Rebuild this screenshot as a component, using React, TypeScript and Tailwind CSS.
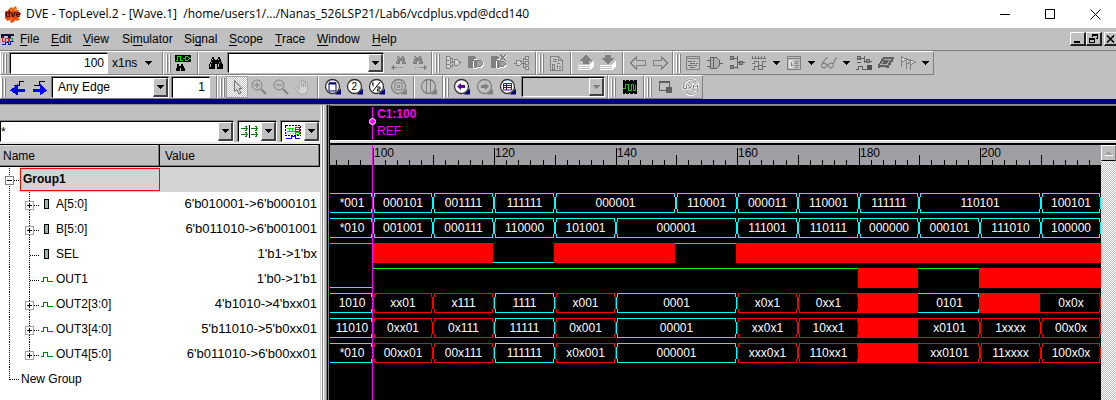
import React from "react";

type Kids = { children?: React.ReactNode };

/* ---------- small building blocks ---------- */

function Grip() {
  return (
    <span className="flex h-[19px] w-1.5 shrink-0 gap-px">
      <span className="w-[2px] border-r border-[#808080] bg-white" />
      <span className="w-[2px] border-r border-[#808080] bg-white" />
    </span>
  );
}

function Group({ children, className = "pl-[2px]" }: Kids & { className?: string }) {
  return (
    <div className={`flex h-6 shrink-0 items-center border-t border-r border-b border-l border-t-white border-r-[#808080] border-b-[#808080] border-l-white ${className}`}>
      {children}
    </div>
  );
}

function Sep() {
  return <span className="mx-[3px] h-full w-[2px] shrink-0 border-r border-l border-r-white border-l-[#808080]" />;
}

function Tool({ label, children, className = "w-[22px]" }: Kids & { label: string; className?: string }) {
  return (
    <button type="button" aria-label={label} className={`flex h-[22px] shrink-0 items-center justify-center ${className}`}>
      <svg width="18" height="18" viewBox="0 0 18 18" fill="none" shapeRendering="crispEdges">
        {children}
      </svg>
    </button>
  );
}

function Down({ color = "#000" }: { color?: string }) {
  return (
    <svg width="7" height="4" viewBox="0 0 7 4" shapeRendering="crispEdges">
      <path d="M0 0h7v1h-1v1h-1v1h-1v1h-1v-1h-1v-1h-1v-1h-1z" fill={color} />
    </svg>
  );
}

function MenuArrow({ label }: { label: string }) {
  return (
    <button type="button" aria-label={label} className="flex h-[22px] w-[13px] shrink-0 items-center justify-center">
      <Down />
    </button>
  );
}

const dropFace =
  "flex h-full w-[15px] shrink-0 items-center justify-center border-t border-l border-r-2 border-b-2 border-t-white border-l-white border-r-[#404040] border-b-[#404040] bg-[#c0c0c0]";

function DropButton({ label }: { label: string }) {
  return (
    <button type="button" aria-label={label} className={dropFace}>
      <Down />
    </button>
  );
}

const sunken =
  "border border-t-black border-l-black border-b-white border-r-white shadow-[-1px_-1px_0_#808080]";

/* ---------- drawings for the tool buttons ---------- */

const Binoculars = ({ color = "#000" }: { color?: string }) => (
  <path
    fill={color}
    fillRule="evenodd"
    d="M5 3h2v2h1v1h2v-1h1v-2h2v2h1v3h1v2h1v5h-6v-5h-2v5h-6v-5h1v-2h1v-3h1zM5 6h1v-1h-1zM11 6h1v-1h-1zM4 9h1v-1h-1zM12 9h1v-1h-1zM3 13h1v-3h-1zM11 13h1v-3h-1z"
  />
);

function FindArrow({ left = false }: { left?: boolean }) {
  return (
    <>
      <path fill="#808080" d={left ? "M8 2h2v1h1v1h1v-1h1v-1h2v2h1v4h1v2h-4v-3h-2v3h-4v-3h1v-3h1z" : "M3 2h2v1h1v1h1v-1h1v-1h2v2h1v3h1v3h-4v-3h-2v3h-4v-3h1v-3h1z"} />
      <path fill="#c0c0c0" d={left ? "M9 4h1v1h-1zM13 4h1v1h-1zM8 7h1v1h-1zM14 7h1v1h-1z" : "M4 4h1v1h-1zM8 4h1v1h-1zM3 7h1v1h-1zM9 7h1v1h-1z"} />
      {left ? (
        <path stroke="#808080" d="M2 13.5h6M9 13.5h1M11 13.5h1M13 13.5h1M4.5 11v5M3.5 12v3" />
      ) : (
        <path stroke="#808080" d="M16 13.5h-6M9 13.5h-1M7 13.5h-1M5 13.5h-1M13.5 11v5M14.5 12v3" />
      )}
    </>
  );
}

function Lens({ off = false, children }: Kids & { off?: boolean }) {
  const ink = off ? "#808080" : "#303030";
  return (
    <g shapeRendering="auto">
      <path d="M11 16.5h6v-6z" fill={off ? "#808080" : "#000080"} />
      <circle cx="8.5" cy="8.5" r="7" fill={off ? "#c0c0c0" : "#fff"} stroke={ink} strokeWidth="1.3" />
      {children}
    </g>
  );
}

const GateStack = () => (
  <>
    <path fill="#d3d3d3" stroke="#808080" d="M2.5 2.5h3l1 1v2l-1 1h-3zM2.5 6.5h3l1 1v2l-1 1h-3zM2.5 10.5h3l1 1v2l-1 1h-3z" />
    <path stroke="#808080" d="M7 4.5h1.5v4M7 12.5h1.5v-3M7 8.5h3M15 8.5h2" />
    <path fill="#d3d3d3" stroke="#808080" d="M10.5 5.5h3l2 2v2l-2 2h-3z" />
  </>
);

const Sheets = () => (
  <path stroke="#fff" strokeWidth="1" d="M1 11.5h12l4-4M1 13.5h12l4-4M1 15.5h12l4-4" />
);

/* ---------- title, menus, toolbars ---------- */

function TitleBar() {
  return (
    <header className="flex h-7 items-center bg-white pl-[5px] pr-[15px] text-black">
      <svg width="17" height="17" viewBox="0 0 17 17">
        <path d="M5 2l2-1 1 2 2-3 2 2-1 2 3 0-1 2 3 1-1 3-2 1 2 2-2 2-3-1-1 2-3 1-1-3-3 1-1-2-3 0 0-4 2-1-1-3 3 0z" fill="#f04a0a" />
        <path d="M5 3l2 1-1 2zM10 2l1 2-2 1zM13 12l1 2-2-1zM5 13l2-1 0 2z" fill="#ffd21a" />
        <text x="0" y="11" fontSize="9" fontWeight="700" fill="#1a0a00" className="font-['Liberation_Sans',sans-serif]">dve</text>
      </svg>
      <h1 className="ml-1 flex-1 truncate whitespace-pre font-['Open_Sans','Noto_Sans',sans-serif] text-[12px] leading-4">
        {"DVE - TopLevel.2 - [Wave.1]  /home/users1/.../Nanas_526LSP21/Lab6/vcdplus.vpd@dcd140"}
      </h1>
      <div className="flex shrink-0 items-center gap-[34px]">
        <button type="button" aria-label="Minimize">
          <svg width="11" height="11" viewBox="0 0 11 11"><path d="M0 5.5h10" stroke="#000" /></svg>
        </button>
        <button type="button" aria-label="Maximize">
          <svg width="11" height="11" viewBox="0 0 11 11"><path d="M.5.5h9v9h-9z" fill="none" stroke="#000" /></svg>
        </button>
        <button type="button" aria-label="Close">
          <svg width="11" height="11" viewBox="0 0 11 11"><path d="M.5.5l10 10M10.5.5l-10 10" stroke="#000" /></svg>
        </button>
      </div>
    </header>
  );
}

const menus: [string, string, string, string][] = [
  ["", "F", "ile", "w-[31px]"],
  ["", "E", "dit", "w-8"],
  ["", "V", "iew", "w-[39px]"],
  ["Si", "m", "ulator", "w-[62px]"],
  ["Si", "g", "nal", "w-[45px]"],
  ["", "S", "cope", "w-[46px]"],
  ["", "T", "race", "w-[42px]"],
  ["", "W", "indow", "w-[55px]"],
  ["", "H", "elp", "w-8"],
];

const mdiFace =
  "flex h-[14px] items-center justify-center border-t border-l border-b-2 border-t-white border-l-white border-b-[#202020] bg-[#c0c0c0]";

function MenuBar() {
  return (
    <nav className="flex h-[23px] items-center border-b border-[#808080] pl-px">
      <svg width="13" height="13" viewBox="0 0 13 13" fill="none" shapeRendering="crispEdges">
        <path d="M0 1.5h13M0 3.5h3M7 3.5h3" stroke="#101040" strokeWidth="2" />
        <path d="M1.5 4v4h3v-3h3v3" stroke="#e02020" />
        <path d="M6 8.5h2v-3h3v3h2" stroke="#008a30" />
        <path d="M1 11.5h3v-2h3v2h2v-3h3" stroke="#1010c0" />
      </svg>
      <ul className="ml-[6px] flex flex-1">
        {menus.map(([a, key, b, w]) => (
          <li key={a + key + b} className={`shrink-0 ${w}`}>
            <button type="button" className="block whitespace-nowrap leading-4">
              {a}<span className="underline underline-offset-2">{key}</span>{b}
            </button>
          </li>
        ))}
      </ul>
      <button type="button" aria-label="Minimize wave" className={`${mdiFace} w-4 border-r-2 border-r-[#202020]`}>
        <svg width="9" height="9" viewBox="0 0 9 9"><path d="M1 7h6v2h-6z" /></svg>
      </button>
      <button type="button" aria-label="Restore wave" className={`${mdiFace} mr-[2px] w-4 border-r-2 border-r-[#202020]`}>
        <svg width="9" height="9" viewBox="0 0 9 9" fill="none" stroke="#000" shapeRendering="crispEdges">
          <path d="M3.5 3v-2.5h5v4h-2M3 1.5h6M.5 4.5h5v4h-5zM0 5.5h6" />
        </svg>
      </button>
      <button type="button" aria-label="Close wave" className={`${mdiFace} w-3`}>
        <svg width="9" height="8" viewBox="0 0 9 8"><path d="M1 .5l7 7M8 .5l-7 7" stroke="#000" strokeWidth="1.5" /></svg>
      </button>
    </nav>
  );
}

function MainTools() {
  return (
    <div className="flex h-6 overflow-hidden">
      <Group className="w-[163px] pl-px">
        <Grip />
        <input aria-label="Time" defaultValue="100" className={`ml-[2px] h-[21px] w-[98px] bg-white pr-[3px] text-right ${sunken}`} />
        <button type="button" className="ml-1 flex items-center gap-2 leading-4">x1ns <Down /></button>
      </Group>
      <Group className="w-[269px] pl-[2px]">
        <Grip />
        <Tool label="Search signals">
          <path fill="#000" d="M1 1h16v7h-16z" />
          <path stroke="#00e000" d="M2 6.5h1.5v-4h3v4h2M9 4.5h3M15 4.5h2M11.5 2.5h2l1.5 1.5v1l-1.5 1.5h-2z" />
          <path fill="#000" d="M3 10h2v2h2v-2h2v2h1v2h1v3h-4v-3h-1v3h-4v-3h1z" />
        </Tool>
        <Sep />
        <span className="w-[3px]" />
        <Tool label="Find"><Binoculars /></Tool>
        <div className={`ml-px flex h-5 w-[156px] bg-white ${sunken}`}>
          <input aria-label="Find text" className="min-w-0 flex-1 bg-white" />
          <DropButton label="Find history" />
        </div>
        <span className="w-[3px]" />
        <Tool label="Find previous"><FindArrow left /></Tool>
        <Tool label="Find next"><FindArrow /></Tool>
      </Group>
      <Group className="w-[104px] pl-[2px]">
        <Grip />
        <Tool label="Drivers" className="w-[23px]"><GateStack /></Tool>
        <Tool label="Loads" className="w-[23px]">
          <path fill="#808080" d="M1 2h6l2 2v10h-8z" /><path stroke="#fff" d="M6.5 7v7M7 5.5h3M7 14.5h3" />
          <path stroke="#808080" fill="#a0a0a4" d="M9.5 6.5h4l2 2v2l-2 2h-4z" /><path stroke="#fff" d="M10 13.5h4l2.5-2.5v-3" />
        </Tool>
        <Tool label="Trace X" className="w-[23px]">
          <path fill="#808080" d="M1 2h6l2 2v10h-8z" /><path stroke="#fff" d="M6.5 7v7M7 5.5h3M7 14.5h3M11 1l6 5M17 1l-6 5" />
          <path stroke="#808080" strokeWidth="1.5" d="M10 1l6 5M16 1l-6 5" />
          <path stroke="#808080" fill="#a0a0a4" d="M9.5 7.5h4l2 2v1l-2 2h-4z" /><path stroke="#fff" d="M10 13.5h4l2.5-2.5" />
        </Tool>
        <Tool label="Fan out" className="w-[23px]">
          <path fill="#d3d3d3" stroke="#808080" d="M3.5 6.5h3l2 1v2l-2 2h-3zM12.5 2.5h3v3h-3zM12.5 7.5h3v3h-3zM12.5 12.5h3v3h-3zM1 9.5h2M8 9.5h4M10.5 4v10M11 4.5h1M11 13.5h1" />
        </Tool>
      </Group>
      <Group className="w-[137px] pl-[2px]">
        <Grip />
        <Tool label="Report">
          <path fill="#c8c8c8" stroke="#808080" d="M3.5 2.5h8l4 4v10h-12zM11.5 2.5v4h4M6 5.5h4M6 7.5h4M10 9.5h3M5.5 10v5h2v-5zM10.5 11v4M12 12.5h2M12 14.5h2" />
        </Tool>
        <Sep />
        <Tool label="Move up"><Sheets /><path fill="#808080" d="M9 1l7 6h-4v3h-6v-3h-4z" /></Tool>
        <Tool label="Move down"><Sheets /><path fill="#808080" d="M6 1h6v3h4l-7 6-7-6h4z" /></Tool>
        <Sep />
        <Tool label="Back"><path stroke="#808080" d="M1.5 9l6-6v3.5h8.5v5h-8.5v3.5z" /></Tool>
        <Tool label="Forward"><path stroke="#808080" d="M16.5 9l-6-6v3.5h-8.5v5h8.5v3.5z" /></Tool>
      </Group>
      <Group className="w-[261px] pl-[2px]">
        <Grip />
        <Tool label="Source">
          <path stroke="#808080" d="M2.5 2.5h13v13h-13zM2 4.5h14" /><path stroke="#707070" d="M4 7.5h4M9 7.5h2M6 9.5h5M12 9.5h2M4 11.5h5M10 11.5h3M6 13.5h5" />
        </Tool>
        <Tool label="Schematic">
          <path fill="#b0b0b0" stroke="#606060" d="M4.5 3.5h6l3 3v5l-3 3h-6zM1 6.5h3M1 12.5h3M14 9.5h3M7.5 4v10" />
        </Tool>
        <Tool label="Path schematic">
          <path fill="#909090" stroke="#606060" d="M2.5 2.5h3v3h-3zM2.5 11.5h3v3h-3zM11.5 7.5h3v3h-3z" />
          <path stroke="#606060" d="M6 4.5h3M6 13.5h3M9 8.5h3M15 8.5h2M9.5 2v13" />
        </Tool>
        <Tool label="Wave view">
          <path stroke="#707070" d="M2 4.5h14M2.5 2v3M5.5 2v3M8.5 2v3M11.5 2v3M14.5 2v3M2 9.5h2.5v-2h4v4h4v-4h3M2 15.5h2.5v-3h4v3h4v-3h3" />
        </Tool>
        <MenuArrow label="Wave view options" />
        <Tool label="List view">
          <path stroke="#808080" d="M2.5 2.5h13v13h-13zM2 4.5h14" /><path fill="#e0e0e0" d="M4 6h4v8h-4z" /><path stroke="#808080" d="M10 7.5h4M10 9.5h3M10 11.5h4M6.5 8v3h1M10 13.5h3" />
        </Tool>
        <MenuArrow label="List view options" />
        <Tool label="Watch">
          <path stroke="#707070" shapeRendering="auto" d="M1.5 11.5a2.5 2.5 0 1 0 5 0a2.5 2.5 0 1 0-5 0M8.5 11.5a2.5 2.5 0 1 0 5 0a2.5 2.5 0 1 0-5 0M6.5 11h2M2 10l4-6h2M13 10l3-6h1" />
        </Tool>
        <MenuArrow label="Watch options" />
        <Tool label="Schematic wave">
          <path fill="#909090" stroke="#606060" d="M2.5 2.5h3v3h-3zM11.5 5.5h3v3h-3z" />
          <path stroke="#606060" d="M2 8.5h4M6 4.5h3M9 7.5h2M9.5 2v7M15 7.5h2M1 15.5h2v-3h4v3h5" />
          <path fill="#505050" d="M12 11h5v5h-5z" />
        </Tool>
        <Tool label="Memory">
          <path fill="#606060" d="M6 3h11v2l-5 9h-11v-3z" /><path stroke="#b0b0b0" d="M7 5.5h7M6 7l-2 3.5h6l3-5M3 13l6 0M12 11v3M14 8v3M16 5v3" />
        </Tool>
        <Tool label="Assertions">
          <path stroke="#808080" fill="#d8d8d8" d="M2.5 13V2.5l5 3-5 3M7.5 15V4.5l4 3-4 3M11.5 16V5.5l5 3-5 2" />
        </Tool>
        <MenuArrow label="Assertion options" />
      </Group>
    </div>
  );
}

function EdgeArrow({ right = false }: { right?: boolean }) {
  return right ? (
    <>
      <path stroke="#000" d="M3 7.5h5v-4h6" /><path fill="#0000ff" d="M2 11h7v-5l7 6.5-7 5v-4h-7z" />
    </>
  ) : (
    <>
      <path stroke="#000" d="M5 7.5h5v-4h5" /><path fill="#0000ff" d="M16 11h-7v-5l-8 6.5 8 5v-4h7z" />
    </>
  );
}

function ZoomTools() {
  return (
    <div className="flex h-6 overflow-hidden">
      <Group className="w-[217px]">
        <Grip />
        <Tool label="Previous edge"><EdgeArrow /></Tool>
        <Tool label="Next edge"><EdgeArrow right /></Tool>
        <div className={`ml-px flex h-[21px] w-[117px] bg-white ${sunken}`}>
          <select aria-label="Edge type" className="min-w-0 flex-1 appearance-none bg-white pl-[5px]">
            <option>Any Edge</option>
          </select>
          <span aria-hidden="true" className={dropFace}><Down /></span>
        </div>
        <input aria-label="Edge count" defaultValue="1" className={`ml-[3px] h-[21px] w-[38px] bg-white pr-1 text-right ${sunken}`} />
      </Group>
      <Group className="w-[226px] pl-[2px]">
        <Grip />
        <Tool label="Select" className="w-[22px] border border-[#a0a0a0] bg-[repeating-conic-gradient(#c0c0c0_0_25%,#fff_0_50%)] bg-[length:2px_2px]">
          <path fill="#d8d8d8" stroke="#707070" shapeRendering="auto" d="M6.5 2.5v11l2.5-2 2 4.5 2-1-2-4.5h3z" />
        </Tool>
        <Tool label="Zoom in">
          <g shapeRendering="auto" stroke="#808080"><circle cx="7" cy="7" r="5" /><path d="M4 7h6M7 4v6" /><path d="M11 11l5 5" strokeWidth="2" /></g>
        </Tool>
        <Tool label="Zoom out">
          <g shapeRendering="auto" stroke="#808080"><circle cx="7" cy="7" r="5" /><path d="M4 7h6" /><path d="M11 11l5 5" strokeWidth="2" /></g>
        </Tool>
        <Tool label="Pan">
          <path shapeRendering="auto" fill="#d8d3d0" stroke="#a09c9a" strokeWidth=".8" d="M6 16l-4.5-5.5c0-1.5 1.5-1.5 2.5 0l1 1v-7c0-1.5 2-1.5 2 0v-1.5c0-1.5 2-1.5 2 0v1c0-1.5 2.2-1.5 2.2 0v1.5c0-1.5 2.3-1.5 2.3 0v6.5l-2 4z" />
          <path stroke="#a09c9a" d="M7.5 5v4M9.5 5v4M11.5 5v4" />
        </Tool>
        <Sep />
        <Tool label="Zoom full"><Lens><path d="M5 5h7v8h-7z" fill="#fff" stroke="#000080" /><path d="M5 5.5h7" stroke="#000080" strokeWidth="2" /></Lens></Tool>
        <Tool label="Zoom 2x"><Lens><text x="5.5" y="12" fontSize="10" fill="#000">2</text></Lens></Tool>
        <Tool label="Zoom half"><Lens><path d="M5 4.5v4M4 5.5h1M12 4l-7 9M9 9h3v2h-2.500v2h3" stroke="#000" /></Lens></Tool>
        <Tool label="Zoom selection"><Lens off><path d="M5 5h7v7h-7zM7.5 7.5h2v2h-2z" stroke="#808080" /></Lens></Tool>
        <Sep />
        <Tool label="Zoom cursors"><Lens off><path d="M6.5 2v13M10.5 2v13" stroke="#808080" /></Lens></Tool>
      </Group>
      <Group className="w-[165px]">
        <Grip />
        <Tool label="Zoom back" className="w-[23px]"><Lens><path d="M4 8.5l4-3.500v2h4v3h-4v2z" fill="#6000a0" /></Lens></Tool>
        <Tool label="Zoom forward" className="w-[23px]"><Lens off><path d="M13 8.5l-4-3.500v2h-4v3h4v2z" fill="#808080" /></Lens></Tool>
        <Tool label="Zoom list" className="w-[23px]"><Lens><path d="M4.5 5.5h8v6.5h-8zM4.5 7.5h8M4.5 9.5h8M7.5 5v7" stroke="#5000a0" /></Lens></Tool>
        <span className="w-[3px]" />
        <div className={`flex h-5 w-[83px] ${sunken}`}>
          <input aria-label="Named zoom" disabled className="min-w-0 flex-1 bg-transparent" />
          <button type="button" aria-label="Named zooms" disabled className={dropFace}><Down color="#808080" /></button>
        </div>
      </Group>
      <Group className="w-9 pl-[2px]">
        <Grip />
        <Tool label="Compare waves" className="w-[25px]">
          <path fill="#000" d="M2 2h14v14h-14z" /><path stroke="#c0c0c0" d="M4.5 2v1M8.5 2v1M12.5 2v1M4.5 15v1M8.5 15v1M12.5 15v1" />
          <path stroke="#00d000" d="M2 10.5h2v-4h3v6h3v-6h2.500v6h2v-6" />
        </Tool>
      </Group>
      <Group className="w-[59px] pl-[2px]">
        <Grip />
        <Tool label="Window settings" className="w-[25px]">
          <path stroke="#606060" d="M2.5 3.5h10v9h-10zM2 4.5h11" /><circle cx="12" cy="12" r="3.5" fill="#606060" />
        </Tool>
        <Tool label="UVM" className="w-[25px]">
          <g shapeRendering="auto"><path d="M3 6a7 7 0 0 1 12-2M15 13a7 7 0 0 1-12 1" stroke="#fff" strokeWidth="2" /><path d="M2 6a7 7 0 0 1 12-2v-2M16 12a7 7 0 0 1-12 2v2" stroke="#909090" />
            <path d="M1.5 6.5v4h3v-4M6 6.5l2 4 2-4M11.5 11v-4l2 2 2-2v4" stroke="#fff" strokeWidth="2" /><path d="M1.5 6.5v4h3v-4M6 6.5l2 4 2-4M11.5 11v-4l2 2 2-2v4" stroke="#808080" /></g>
        </Tool>
      </Group>
    </div>
  );
}

/* ---------- signal list ---------- */

type Signal = { name: string; value: string; kind: "in" | "out"; bus: boolean };

const signals: Signal[] = [
  { name: "A[5:0]", value: "6'b010001->6'b000101", kind: "in", bus: true },
  { name: "B[5:0]", value: "6'b011010->6'b001001", kind: "in", bus: true },
  { name: "SEL", value: "1'b1->1'bx", kind: "in", bus: false },
  { name: "OUT1", value: "1'b0->1'b1", kind: "out", bus: false },
  { name: "OUT2[3:0]", value: "4'b1010->4'bxx01", kind: "out", bus: true },
  { name: "OUT3[4:0]", value: "5'b11010->5'b0xx01", kind: "out", bus: true },
  { name: "OUT4[5:0]", value: "6'b011010->6'b00xx01", kind: "out", bus: true },
];

function Branch({ signal, last }: { signal: Signal; last: boolean }) {
  return (
    <svg width="55" height="25" viewBox="0 0 55 25" fill="none" shapeRendering="crispEdges" className="shrink-0">
      <path d={`M9.5 0v25M29.5 0v${last ? 13 : 25}`} stroke="#000" strokeDasharray="1 1" />
      <path d="M30 13.5h9" stroke="#000" strokeDasharray="1 1" />
      {signal.bus && (
        <>
          <path d="M25.5 9.5h8v8h-8z" fill="#fff" stroke="#a0a0a0" />
          <path d="M27 13.5h5M29.5 11v5" stroke="#000" />
        </>
      )}
      {signal.kind === "in" ? (
        <path d="M44.5 7.5h4v9h-4z" fill="#9cb5a8" stroke="#000" />
      ) : (
        <path d="M41 14.5h2.5v-4h4v4h5.5" stroke="#008000" />
      )}
    </svg>
  );
}

const headCell =
  "h-[23px] border-t border-b border-r border-black bg-[#c0c0c0] p-0 text-left leading-4 font-normal shadow-[inset_-1px_-1px_0_#808080,inset_0_1px_0_#e0e0e0]";

function SignalPane() {
  return (
    <section className="flex w-[321px] shrink-0 flex-col border-r border-[#d3d3d3] bg-white">
      <div className="h-[15px] bg-[#c0c0c0]" />
      <div className="flex h-6 gap-1 border-b-2 border-[#e8e8e8] bg-[#c0c0c0] pt-px">
        <div className={`flex h-[21px] flex-1 bg-white ${sunken}`}>
          <input aria-label="Filter" defaultValue="*" className="min-w-0 flex-1 bg-white" />
          <DropButton label="Filter history" />
        </div>
        <div className={`flex h-[21px] w-[39px] items-center bg-white ${sunken}`}>
          <svg width="22" height="17" viewBox="1 0 22 17" fill="none" shapeRendering="crispEdges" className="flex-1">
            <path d="M3 5.5h7M3 11.5h7M13 5.5h7M13 11.5h7" stroke="#008000" />
            <path d="M7.5 3l2 2.500-2 2.500M7.5 9l2 2.500-2 2.500M17.5 3l2 2.500-2 2.500M17.5 9l2 2.500-2 2.500" stroke="#008000" />
            <path d="M11.5 2v13" stroke="#000" />
          </svg>
          <DropButton label="Direction filter" />
        </div>
        <div className={`flex h-[21px] w-[39px] items-center bg-white ${sunken}`}>
          <svg width="22" height="17" viewBox="0 0 22 17" fill="none" shapeRendering="crispEdges" className="flex-1">
            <path d="M3.5 2.5h15v10h-15z" stroke="#000" strokeDasharray="2 1" />
            <path d="M5 5.5h7M5 8.5h8M7.5 5v4M10.5 5v4" stroke="#00e000" />
            <path d="M13 6.5h4M13.5 4v4h4v-4z" stroke="#ff0000" />
            <path d="M4 10.5h9" stroke="#ffe000" />
            <path d="M13.5 9.5h4v2h-4z" stroke="#00c000" />
            <path d="M4 15.5h5v-2h4v2h5" stroke="#0000ff" />
          </svg>
          <DropButton label="Type filter" />
        </div>
      </div>
      <table className="w-full table-fixed border-separate border-spacing-0">
        <thead>
          <tr>
            <th className={`${headCell} w-[160px] pl-[3px]`}>Name</th>
            <th className={`${headCell} pl-[5px]`}>Value</th>
          </tr>
        </thead>
        <tbody>
          <tr className="h-[25px]">
            <td className="p-0">
              <div className="flex h-[25px] bg-[#d3d3d3]">
                <svg width="20" height="25" viewBox="0 0 20 25" fill="none" shapeRendering="crispEdges" className="shrink-0 bg-white">
                  <path d="M9.5 1v24M14 13.5h5" stroke="#000" strokeDasharray="1 1" />
                  <path d="M5.5 9.5h8v8h-8z" fill="#fff" stroke="#808080" />
                  <path d="M7 13.5h5" stroke="#000" />
                </svg>
                <span className="mt-px h-[23px] flex-1 border border-[#ff0000] pl-[2px] font-bold leading-5">Group1</span>
              </div>
            </td>
            <td className="bg-[#d3d3d3] p-0" />
          </tr>
          {signals.map((s, i) => (
            <tr key={s.name} className="h-[25px]">
              <td className="p-0">
                <div className="flex h-[25px] gap-px leading-6">
                  <Branch signal={s} last={i === signals.length - 1} />
                  {s.name}
                </div>
              </td>
              <td className="p-0 pr-[3px] text-right align-top text-[13px] leading-6">{s.value}</td>
            </tr>
          ))}
          <tr className="h-[25px]">
            <td className="p-0" colSpan={2}>
              <div className="flex h-[25px] gap-px leading-6">
                <svg width="20" height="25" viewBox="0 0 20 25" shapeRendering="crispEdges">
                  <path d="M9.5 0v13M10 12.5h9" fill="none" stroke="#000" strokeDasharray="1 1" />
                </svg>
                New Group
              </div>
            </td>
          </tr>
        </tbody>
      </table>
    </section>
  );
}

/* ---------- wave drawing ---------- */

const CYAN = "#00ffff";
const RED = "#ff0000";
const GREEN = "#00ff00";

const timeX = (t: number) => Math.min(771, Math.floor(43 + (t - 100) * 6.075));

type Cell = [from: number, to: number, text: string, look: "c" | "r" | "solid"];

const buses: { top: number; cells: Cell[] }[] = [
  {
    top: 28,
    cells: [[80, 100, "*001", "c"], [100, 110, "000101", "c"], [110, 120, "001111", "c"], [120, 130, "111111", "c"], [130, 150, "000001", "c"], [150, 160, "110001", "c"], [160, 170, "000011", "c"], [170, 180, "110001", "c"], [180, 190, "111111", "c"], [190, 210, "110101", "c"], [210, 220, "100101", "c"]],
  },
  {
    top: 53,
    cells: [[80, 100, "*010", "c"], [100, 110, "001001", "c"], [110, 120, "000111", "c"], [120, 130, "110000", "c"], [130, 140, "101001", "c"], [140, 160, "000001", "c"], [160, 170, "111001", "c"], [170, 180, "110111", "c"], [180, 190, "000000", "c"], [190, 200, "000101", "c"], [200, 210, "111010", "c"], [210, 220, "100000", "c"]],
  },
  {
    top: 128,
    cells: [[80, 100, "1010", "c"], [100, 110, "xx01", "r"], [110, 120, "x111", "r"], [120, 130, "1111", "c"], [130, 140, "x001", "r"], [140, 160, "0001", "c"], [160, 170, "x0x1", "r"], [170, 180, "0xx1", "r"], [180, 190, "", "solid"], [190, 200, "0101", "c"], [200, 210, "", "solid"], [210, 220, "0x0x", "r"]],
  },
  {
    top: 153,
    cells: [[80, 100, "11010", "c"], [100, 110, "0xx01", "r"], [110, 120, "0x111", "r"], [120, 130, "11111", "c"], [130, 140, "0x001", "r"], [140, 160, "00001", "c"], [160, 170, "xx0x1", "r"], [170, 180, "10xx1", "r"], [180, 190, "", "solid"], [190, 200, "x0101", "r"], [200, 210, "1xxxx", "r"], [210, 220, "00x0x", "r"]],
  },
  {
    top: 178,
    cells: [[80, 100, "*010", "c"], [100, 110, "00xx01", "r"], [110, 120, "00x111", "r"], [120, 130, "111111", "c"], [130, 140, "x0x001", "r"], [140, 160, "000001", "c"], [160, 170, "xxx0x1", "r"], [170, 180, "110xx1", "r"], [180, 190, "", "solid"], [190, 200, "xx0101", "r"], [200, 210, "11xxxx", "r"], [210, 220, "100x0x", "r"]],
  },
];

function Bus({ top, cells }: { top: number; cells: Cell[] }) {
  const t = top + 0.5;
  const b = top + 19.5;
  return (
    <g>
      {cells.map(([from, to, text, look], i) => {
        const x0 = timeX(from);
        const x1 = timeX(to);
        if (look === "solid") return <rect key={from} x={x0 - 1} y={top} width={x1 - x0} height="20" fill={RED} />;
        const afterSolid = i > 0 && cells[i - 1][3] === "solid";
        const right = `H${x1 - 1.5}V${t + 2}L${x1 - 0.5} ${t + 5}V${b - 5}L${x1 - 1.5} ${b - 2}V${b}`;
        const d = afterSolid
          ? `M${x0 - 1} ${t}${right}H${x0 - 1}`
          : `M${x0 + 1.5} ${t}${right}H${x0 + 1.5}V${b - 2}L${x0 + 0.5} ${b - 5}V${t + 5}L${x0 + 1.5} ${t + 2}Z`;
        const centre = from === 80 ? 22 : (x0 + x1) / 2;
        return (
          <g key={from}>
            <path d={d} fill="none" stroke={look === "c" ? CYAN : RED} />
            <text x={centre} y={top + 14} textAnchor="middle" fill="#fff">{text}</text>
          </g>
        );
      })}
    </g>
  );
}

const fills = [
  { from: 100, to: 120, y: 78 },
  { from: 130, to: 150, y: 78 },
  { from: 160, to: 221, y: 78 },
  { from: 180, to: 190, y: 103 },
  { from: 200, to: 221, y: 103 },
];

const levels = [
  { from: 90, to: 100, y: 78.5, color: GREEN },
  { from: 120, to: 130, y: 97.5, color: CYAN },
  { from: 150, to: 160, y: 78.5, color: GREEN },
  { from: 90, to: 100, y: 122.5, color: CYAN },
  { from: 100, to: 180, y: 103.5, color: GREEN },
  { from: 190, to: 200, y: 103.5, color: GREEN },
];

const ticks = Array.from({ length: 64 }, (_, i) => 94 + i * 2).filter((t) => t < 220);

function WavePane() {
  return (
    <section className="flex min-w-0 flex-1 flex-col bg-black">
      <div className="h-[35px] border-t border-[#808080]">
        <svg width="771" height="34" viewBox="0 0 771 34">
          <path d="M42.5 1v33" stroke="#ff00ff" />
          <circle cx="42.5" cy="15.5" r="3" fill="#ff00ff" stroke="#fff" />
          <text x="47" y="12" fontSize="12" fontWeight="700" fill="#ff00ff">C1:100</text>
          <text x="47" y="29" fontSize="12" fill="#ff00ff">REF</text>
        </svg>
      </div>
      <div className="h-[5px] border-t border-b-2 border-t-white border-b-black bg-[#d8d8d8]" />
      <div className="flex min-h-0 flex-1">
        <div className="min-w-0 flex-1 overflow-hidden">
          <svg width="771" height="20" viewBox="0 0 771 20" shapeRendering="crispEdges" className="block bg-[#a0a0a4]">
            {ticks.map((t) => {
              const h = t % 20 === 0 ? 17 : t % 10 === 0 ? 10 : 5;
              return <rect key={t} x={timeX(t)} y={20 - h} width="1" height={h} fill="#000" />;
            })}
            {[100, 120, 140, 160, 180, 200].map((t) => (
              <text key={t} x={timeX(t) + 1} y="12" fontSize="12" fill="#000">{t}</text>
            ))}
            <path d="M42.5 0v20" stroke="#ff00ff" />
          </svg>
          <svg width="771" height="235" viewBox="0 0 771 235" fontSize="12" shapeRendering="crispEdges" className="block">
            {fills.map((f) => (
              <rect key={`${f.from}-${f.y}`} x={timeX(f.from) - 1} y={f.y} width={timeX(f.to) - timeX(f.from) + (f.to > 220 ? 1 : 0)} height="20" fill={RED} />
            ))}
            {levels.map((l) => (
              <path key={`${l.from}-${l.y}`} d={`M${timeX(l.from) - 1} ${l.y}H${timeX(l.to) - 1}`} stroke={l.color} />
            ))}
            {buses.map((b) => (
              <Bus key={b.top} top={b.top} cells={b.cells} />
            ))}
            <path d="M42.5 0v235" stroke="#ff00ff" />
          </svg>
        </div>
        <div className="flex w-[15px] shrink-0 flex-col bg-[repeating-conic-gradient(#c0c0c0_0_25%,#fff_0_50%)] bg-[length:2px_2px]">
          <button type="button" aria-label="Scroll up" className="flex h-4 items-center justify-center border-t border-l border-r border-b border-t-white border-l-white border-r-[#808080] border-b-black bg-[#c0c0c0]">
            <svg width="9" height="5" viewBox="0 0 9 5" shapeRendering="crispEdges">
              <path d="M4 0h1v1h1v1h1v1h1v1h-7v-1h1v-1h1v-1h1z" fill="#a0a0a4" /><path d="M1 4.5h8" stroke="#fff" />
            </svg>
          </button>
        </div>
      </div>
    </section>
  );
}

export default function App() {
  return (
    <main className="flex h-screen flex-col overflow-hidden bg-[#c0c0c0] font-['Liberation_Sans',Arial,sans-serif] text-[12px] text-black">
      <TitleBar />
      <MenuBar />
      <MainTools />
      <ZoomTools />
      <div className="h-[6px] shrink-0 border-b border-b-[#909090] bg-[#000080]" />
      <div className="flex min-h-0 flex-1">
        <SignalPane />
        <div className="flex w-[9px] shrink-0">
          <span className="w-px bg-white" />
          <span className="w-px bg-[#808080]" />
          <span className="w-px bg-white" />
          <span className="w-[2px] bg-[#c0c0c0]" />
          <span className="w-px bg-[#808080]" />
          <span className="w-px bg-black" />
          <span className="w-px bg-[#808080]" />
          <span className="w-px bg-black" />
        </div>
        <WavePane />
      </div>
    </main>
  );
}
